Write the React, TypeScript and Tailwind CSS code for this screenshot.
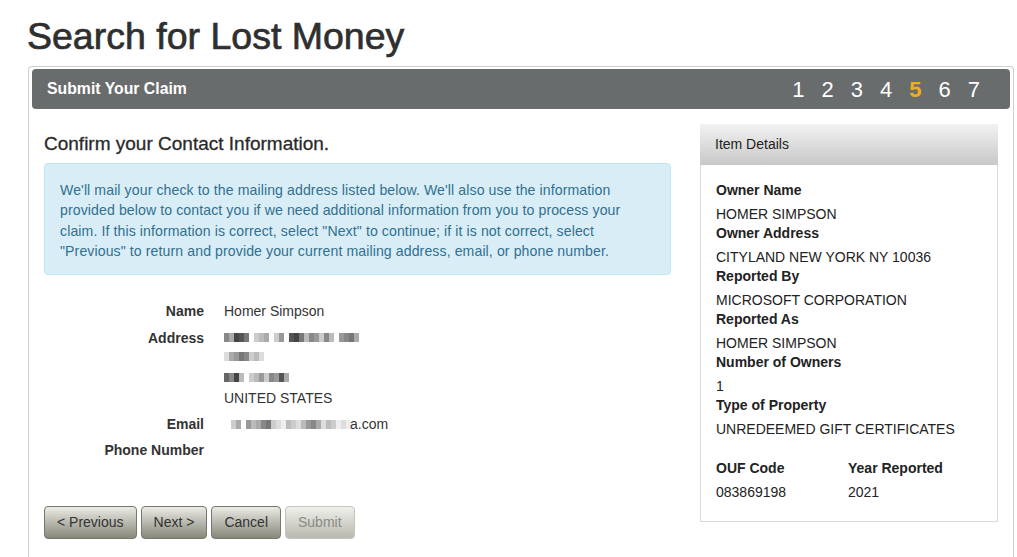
import React from "react";

const Pix = ({ cells }: { cells: string[] }) => (
  <div className="flex h-[9px] items-center">
    {cells.map((c, i) => (
      <div key={i} className="h-[9px] w-[5px]" style={{ background: c }} />
    ))}
  </div>
);

const L1 = ["#888", "#aaa", "#444", "#555", "#777", "#fff", "#ccc", "#bbb", "#aaa", "#fff", "#ccc", "#999", "#fff", "#555", "#444", "#777", "#bbb", "#888", "#999", "#ccc", "#888", "#bbb", "#fff", "#999", "#888", "#777", "#aaa"];
const L2 = ["#ddd", "#aaa", "#999", "#777", "#888", "#ccc", "#bbb", "#ddd"];
const L3 = ["#666", "#888", "#444", "#bbb", "#fff", "#ccc", "#bbb", "#999", "#ccc", "#888", "#999", "#555", "#aaa"];
const L4 = ["#ccc", "#aaa", "#fff", "#999", "#bbb", "#aaa", "#888", "#777", "#ccc", "#ddd", "#eee", "#bbb", "#ccc", "#ddd", "#bbb", "#999", "#888", "#aaa", "#ddd", "#bbb", "#ccc", "#eee", "#ddd", "#eee"];

const Btn = ({ children, disabled }: { children: React.ReactNode; disabled?: boolean }) => (
  <button
    className={
      disabled
        ? "h-[33px] rounded-[4px] border border-[#c4c4bc] bg-gradient-to-b from-[#f0f0ec] to-[#b8b8ae] px-[12px] text-[14px] text-[#8a8a85]"
        : "h-[33px] rounded-[4px] border border-[#77776c] bg-gradient-to-b from-[#ececE6] to-[#87877a] px-[12px] text-[14px] text-[#333]"
    }
  >
    {children}
  </button>
);

export default function App() {
  return (
    <div className="min-h-[557px] bg-white font-['Liberation_Sans',Arial,sans-serif] text-[#333]">
      <h1 className="pl-[27px] pt-[15px] text-[37.5px] leading-[42px] font-normal text-[#2f2f2f] [-webkit-text-stroke:0.7px_#2f2f2f]">Search for Lost Money</h1>
      <div className="ml-[28px] mt-[9px] w-[986px] h-[492px] rounded-t-[4px] border border-b-0 border-[#cfcfcf] px-[3px] pt-[2px]">
        <div className="flex h-[40px] items-center justify-between rounded-[4px] bg-[#696c6c] pl-[15px] pr-[30px] text-white">
          <div className="text-[15.8px] font-bold">Submit Your Claim</div>
          <div className="flex gap-[17px] text-[22px]">
            <span>1</span>
            <span>2</span>
            <span>3</span>
            <span>4</span>
            <span className="font-bold text-[#efac22]">5</span>
            <span>6</span>
            <span>7</span>
          </div>
        </div>
        <div className="flex pl-[12px] pt-[15px]">
          <div className="w-[627px]">
            <h2 className="mt-[9px] text-[19px] leading-[22px] text-[#2a2a2a] [-webkit-text-stroke:0.3px_#2a2a2a]">Confirm your Contact Information.</h2>
            <div className="mt-[8px] h-[112px] rounded-[4px] border border-[#bce8f1] bg-[#d9edf7] px-[15px] pt-[16px] text-[14.1px] leading-[20.3px] tracking-[0.1px] text-[#31708f]">
              We'll mail your check to the mailing address listed below. We'll also use the information provided below to contact you if we need additional information from you to process your claim. If this information is correct, select "Next" to continue; if it is not correct, select "Previous" to return and provide your current mailing address, email, or phone number.
            </div>
            <div className="mt-[26px] text-[14px] leading-[20px]">
              <div className="flex">
                <div className="w-[160px] pr-[0px] text-right font-bold">Name</div>
                <div className="pl-[20px]">Homer Simpson</div>
              </div>
              <div className="mt-[7px] flex">
                <div className="w-[160px] text-right font-bold">Address</div>
                <div className="pl-[20px]">
                  <div className="flex h-[18px] items-center"><Pix cells={L1} /></div>
                  <div className="flex h-[21px] items-center"><Pix cells={L2} /></div>
                  <div className="flex h-[21px] items-center"><Pix cells={L3} /></div>
                  <div className="h-[20px]">UNITED STATES</div>
                </div>
              </div>
              <div className="mt-[6px] flex">
                <div className="w-[160px] text-right font-bold">Email</div>
                <div className="flex items-center pl-[27px]"><Pix cells={L4} /><span className="-ml-[1px]">a.com</span></div>
              </div>
              <div className="mt-[6px] flex">
                <div className="w-[160px] text-right font-bold">Phone Number</div>
              </div>
            </div>
            <div className="mt-[46px] flex gap-[4px]">
              <Btn>&lt; Previous</Btn>
              <Btn>Next &gt;</Btn>
              <Btn>Cancel</Btn>
              <Btn disabled>Submit</Btn>
            </div>
          </div>
          <div className="ml-[29px] w-[298px]">
            <div className="flex h-[41px] items-center border-b border-[#c8c8c8] bg-gradient-to-b from-[#f2f2f2] to-[#c9c9c9] pl-[15px] text-[14px] text-[#222]">Item Details</div>
            <div className="h-[357px] border border-t-0 border-[#dadada] px-[15px] pt-[16px] text-[14px] leading-[19px] text-[#222]">
              <div className="font-bold">Owner Name</div>
              <div className="mt-[5px]">HOMER SIMPSON</div>
              <div className="font-bold">Owner Address</div>
              <div className="mt-[5px]">CITYLAND NEW YORK NY 10036</div>
              <div className="font-bold">Reported By</div>
              <div className="mt-[5px]">MICROSOFT CORPORATION</div>
              <div className="font-bold">Reported As</div>
              <div className="mt-[5px]">HOMER SIMPSON</div>
              <div className="font-bold">Number of Owners</div>
              <div className="mt-[5px]">1</div>
              <div className="font-bold">Type of Property</div>
              <div className="mt-[5px]">UNREDEEMED GIFT CERTIFICATES</div>
              <div className="mt-[20px] grid grid-cols-[132px_1fr]">
                <div className="font-bold">OUF Code</div>
                <div className="font-bold">Year Reported</div>
                <div className="mt-[5px]">083869198</div>
                <div className="mt-[5px]">2021</div>
              </div>
            </div>
          </div>
        </div>
      </div>
    </div>
  );
}
